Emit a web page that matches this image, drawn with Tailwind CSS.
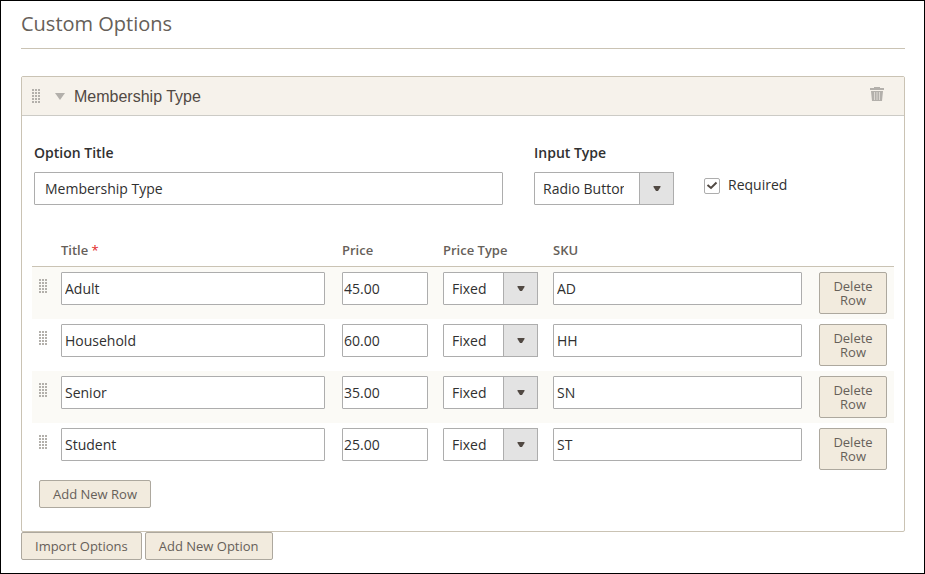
<!DOCTYPE html>
<html lang="en">
<head>
<meta charset="utf-8">
<meta name="viewport" content="width=device-width, initial-scale=1">
<title>Custom Options</title>
<script src="https://cdn.jsdelivr.net/npm/@tailwindcss/browser@4"></script>
</head>
<body class="bg-white text-sm text-[#303030] font-['Open_Sans','Noto_Sans',sans-serif]">
<svg class="absolute h-0 w-0" aria-hidden="true">
  <defs>
    <pattern id="dots" width="3" height="3" patternUnits="userSpaceOnUse"><rect width="2" height="2" fill="#b3b0ab"/></pattern>
    <symbol id="grip" viewBox="0 0 9 14"><rect width="9" height="14" fill="url(#dots)"/></symbol>
    <symbol id="caret" viewBox="0 0 8 6"><path d="M.5 0h7v1L5 5H3L.5 1z" fill="#514943"/></symbol>
  </defs>
</svg>
<main class="min-h-screen border border-black pl-5 pr-[19px] pb-3">
  <h1 class="border-b border-[#cac3b4] pt-2 pb-[9px] text-xl leading-[30px] text-[#666059]">Custom Options</h1>

  <section class="mt-[27px] rounded-[2px] border border-[#cac3b4]">
    <header class="flex h-[39px] items-center border-b border-[#cccbc6] bg-[#f6f2eb] pl-[10px] pr-5">
      <svg class="h-[14px] w-[9px]"><use href="#grip"/></svg>
      <button type="button" aria-label="Collapse option" class="ml-[14px]"><svg class="block h-[7px] w-[10px]" viewBox="0 0 10 7"><path d="M0 0h10L5 7z" fill="#b3b0ab"/></svg></button>
      <h2 class="ml-[9px] flex-1 pt-px font-['Liberation_Sans',Arial,sans-serif] text-base text-[#514943]">Membership Type</h2>
      <button type="button" aria-label="Delete option" class="mb-1"><svg class="block h-[15px] w-[14px]" viewBox="0 0 14 15"><path d="M4 1V0h6v1h4v2H0V1zM1 4h12l-1 10H2z" fill="#b3b0ab"/><path d="M4.500 5v8M7 5v8M9.500 5v8" stroke="#dcd8d2" stroke-width="1"/></svg></button>
    </header>

    <div class="px-[10px] pt-[27px] pb-[23px]">
      <div class="grid grid-cols-[470fr_140px_190fr] gap-x-[30px] pl-[2px]">
        <div class="pr-px">
          <label for="option-title" class="block font-semibold leading-5">Option Title</label>
          <input id="option-title" value="Membership Type" class="mt-[9px] block h-[33px] w-full rounded-[1px] border border-[#adadad] bg-white px-[10px]">
        </div>
        <div>
          <label for="input-type" class="block font-semibold leading-5">Input Type</label>
          <div class="relative mt-[9px]">
            <select id="input-type" class="block h-[33px] w-full appearance-none rounded-[1px] border border-[#adadad] bg-white pl-2 pr-[49px]"><option>Radio Buttons</option></select>
            <span class="pointer-events-none absolute inset-y-0 right-0 flex w-[35px] items-center justify-center border border-[#adadad] bg-[#e3e3e3]"><svg class="h-[6px] w-2"><use href="#caret"/></svg></span>
          </div>
        </div>
        <div class="flex items-end self-end pb-[11px]">
          <span class="relative block h-4 w-4">
            <input id="required" type="checkbox" checked class="block h-4 w-4 appearance-none rounded-[2px] border border-[#adadad] bg-white">
            <svg class="pointer-events-none absolute inset-0 h-4 w-4" viewBox="0 0 16 16"><path d="M3.500 7L7 10L12.500 4.500" fill="none" stroke="#514943" stroke-width="2"/></svg>
          </span>
          <label for="required" class="pl-2 leading-[18px]">Required</label>
        </div>
      </div>

      <table class="mt-[35px] w-full table-fixed border-collapse text-left">
        <colgroup><col class="w-[29px]"><col class="w-[32.6%]"><col class="w-[101px]"><col class="w-[110px]"><col><col class="w-[75px]"></colgroup>
        <thead>
          <tr class="border-b border-[#cac3b4] text-[13px] leading-5 text-[#666059]">
            <th></th>
            <th class="pb-[6px] font-semibold">Title <span class="font-normal text-[#e22626]">*</span></th>
            <th class="pb-[6px] font-semibold">Price</th>
            <th class="pb-[6px] font-semibold">Price Type</th>
            <th class="pb-[6px] font-semibold">SKU</th>
            <th></th>
          </tr>
        </thead>
        <tbody id="rows"></tbody>
      </table>
      <button type="button" class="mt-[5px] ml-[7px] block h-7 rounded-[2px] border border-[#ada89e] bg-[#f2ebde] px-[13px] text-[13px] text-[#666059]">Add New Row</button>
    </div>
  </section>
  <div class="flex gap-[3px]">
    <button type="button" class="h-7 rounded-[2px] border border-[#ada89e] bg-[#f2ebde] px-[13px] text-[13px] text-[#666059]">Import Options</button>
    <button type="button" class="h-7 rounded-[2px] border border-[#ada89e] bg-[#f2ebde] px-[13px] text-[13px] text-[#666059]">Add New Option</button>
  </div>
</main>
<script>
  const rows = [["Adult", "45.00", "AD"], ["Household", "60.00", "HH"], ["Senior", "35.00", "SN"], ["Student", "25.00", "ST"]];
  document.getElementById("rows").innerHTML = rows.map(([title, price, sku]) => `
    <tr class="align-top odd:bg-[#fbfaf6]">
      <td class="pt-3 pl-[7px]"><svg class="block h-[14px] w-[9px]"><use href="#grip"/></svg></td>
      <td class="py-[5px] pr-[17px]"><input aria-label="Title" value="${title}" class="block h-[33px] w-full rounded-[1px] border border-[#adadad] bg-white px-[3px]"></td>
      <td class="py-[5px] pr-[15px]"><input aria-label="Price" value="${price}" class="block h-[33px] w-full rounded-[1px] border border-[#adadad] bg-white px-px"></td>
      <td class="py-[5px] pr-[15px]"><div class="relative">
        <select aria-label="Price Type" class="block h-[33px] w-full appearance-none rounded-[1px] border border-[#adadad] bg-white pl-2 pr-[35px]"><option>Fixed</option><option>Percent</option></select>
        <span class="pointer-events-none absolute inset-y-0 right-0 flex w-[35px] items-center justify-center border border-[#adadad] bg-[#e3e3e3]"><svg class="h-[6px] w-2"><use href="#caret"/></svg></span>
      </div></td>
      <td class="py-[5px] pr-[17px]"><input aria-label="SKU" value="${sku}" class="block h-[33px] w-full rounded-[1px] border border-[#adadad] bg-white px-[3px]"></td>
      <td class="py-[5px] pr-[7px]"><button type="button" class="block h-[42px] w-full rounded-[2px] border border-[#ada89e] bg-[#f2ebde] px-3 text-[13px] leading-[14px] text-[#666059]">Delete Row</button></td>
    </tr>`).join("");
</script>
</body>
</html>
